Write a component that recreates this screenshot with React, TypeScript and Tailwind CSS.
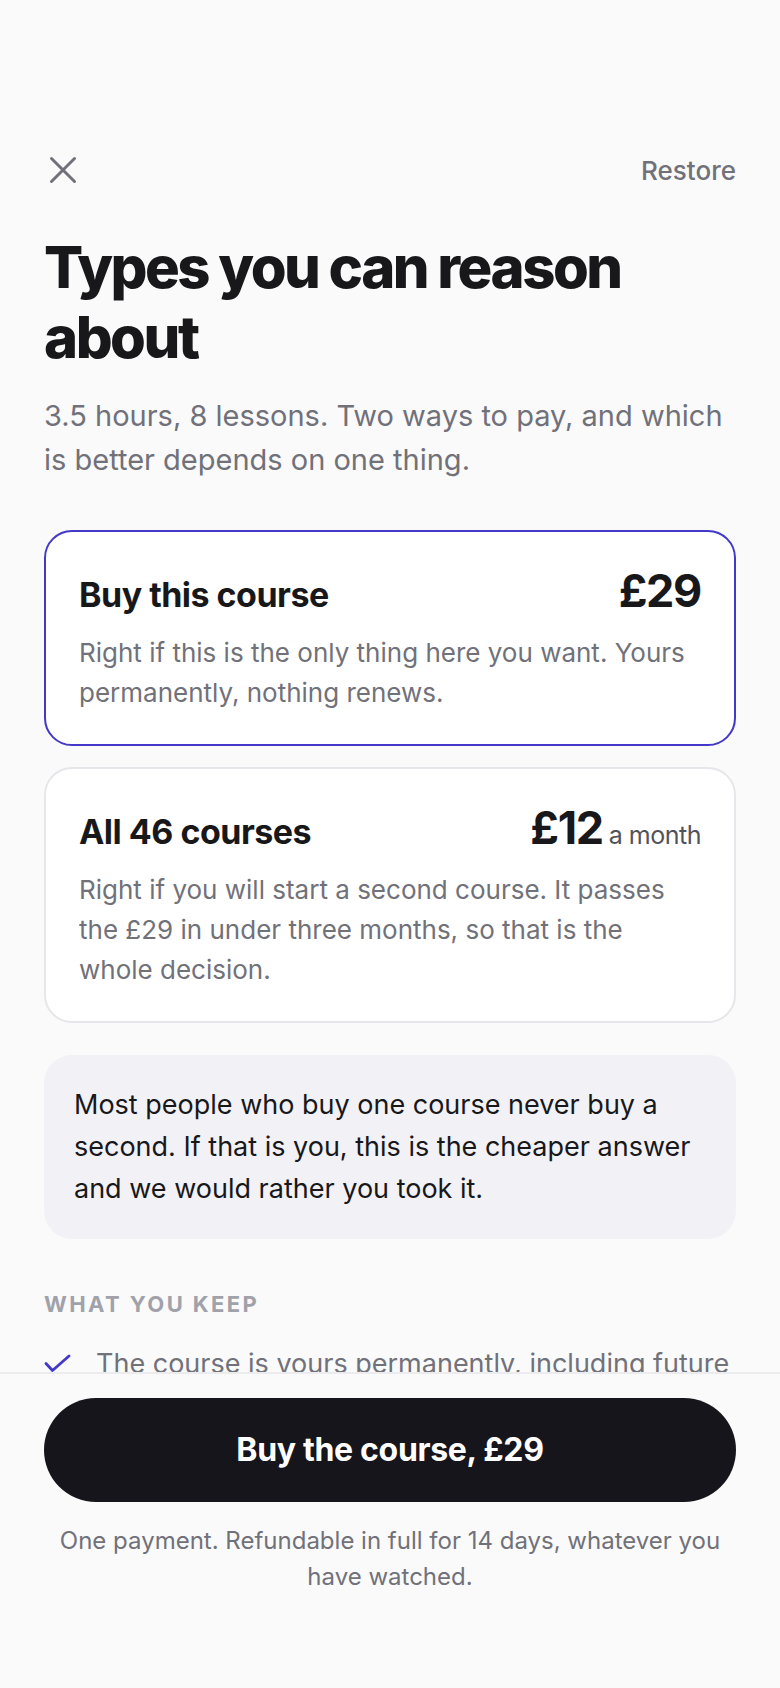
import React from 'react';

const keeps = ['The course is yours permanently, including future updates to it.'];

function CloseIcon() {
  return (
    <svg width="28" height="28" viewBox="0 0 28 28" fill="none">
      <path d="M2.5 2.5L25.5 25.5M25.5 2.5L2.5 25.5" stroke="#71717a" strokeWidth="3" strokeLinecap="round" />
    </svg>
  );
}

function CheckIcon() {
  return (
    <svg width="28" height="20" viewBox="0 0 28 20" fill="none" className="shrink-0 mt-[10px]">
      <path d="M2 9.5L8.5 16.5L25 2" stroke="#4338ca" strokeWidth="2.8" strokeLinecap="round" strokeLinejoin="round" />
    </svg>
  );
}

function PlanCard({
  title,
  price,
  unit,
  text,
  selected,
}: {
  title: string;
  price: string;
  unit?: string;
  text: string;
  selected?: boolean;
}) {
  return (
    <div
      className={
        selected
          ? 'rounded-[28px] border-2 border-[#4338ca] bg-white px-[33px] pt-[36px] pb-[31px]'
          : 'rounded-[28px] border-2 border-[#e7e7eb] bg-white px-[33px] pt-[36px] pb-[31px]'
      }
    >
      <div className="flex items-baseline justify-between">
        <span className="text-[34px] leading-[36px] font-bold tracking-[-0.015em] text-[#18181b]">{title}</span>
        <span className="flex items-baseline gap-[6px]">
          <span className="text-[45px] leading-none font-bold tracking-[-0.03em] text-[#18181b]">{price}</span>
          {unit && <span className="text-[25px] leading-none tracking-[-0.02em] text-[#52525b]">{unit}</span>}
        </span>
      </div>
      <p className="mt-[20px] text-[26px] leading-[40px] text-[#71717a]">{text}</p>
    </div>
  );
}

export default function App() {
  return (
    <div
      className="h-[1688px] flex flex-col bg-[#fafafa] overflow-hidden"
      style={{ fontFamily: 'Inter, "Noto Sans", sans-serif' }}
    >
      <main className="flex-1 overflow-hidden px-[44px] pt-[148px]">
        <div className="flex h-[44px] items-center justify-between">
          <button className="flex h-[28px] w-[28px] items-center justify-center ml-[5px]">
            <CloseIcon />
          </button>
          <button className="text-[26px] font-medium text-[#71717a]">Restore</button>
        </div>

        <h1 className="mt-[40px] text-[58px] leading-[70px] font-extrabold tracking-[-0.043em] text-[#18181b]">
          Types you can reason about
        </h1>
        <p className="mt-[22px] text-[29px] leading-[44px] text-[#71717a]">
          3.5 hours, 8 lessons. Two ways to pay, and which is better depends on one thing.
        </p>

        <div className="mt-[48px] flex flex-col gap-[21px]">
          <PlanCard
            selected
            title="Buy this course"
            price="£29"
            text="Right if this is the only thing here you want. Yours permanently, nothing renews."
          />
          <PlanCard
            title="All 46 courses"
            price="£12"
            unit="a month"
            text="Right if you will start a second course. It passes the £29 in under three months, so that is the whole decision."
          />
        </div>

        <div className="mt-[32px] rounded-[28px] bg-[#f2f1f6] px-[30px] pt-[29px] pb-[29px]">
          <p className="text-[27px] leading-[42px] text-[#18181b]">
            Most people who buy one course never buy a second. If that is you, this is the cheaper answer and we would
            rather you took it.
          </p>
        </div>

        <h2 className="mt-[51px] text-[22px] leading-[28px] font-bold tracking-[0.11em] text-[#a1a1aa]">
          WHAT YOU KEEP
        </h2>
        <ul className="mt-[26px] flex flex-col gap-[16px]">
          {keeps.map((k) => (
            <li key={k} className="flex gap-[24px]">
              <CheckIcon />
              <span className="text-[27px] leading-[40px] text-[#71717a]">{k}</span>
            </li>
          ))}
        </ul>
      </main>

      <footer className="shrink-0 border-t-2 border-[#ececef] bg-[#fafafa] px-[44px] pt-[24px] pb-[93px]">
        <button className="flex h-[104px] w-full items-center justify-center rounded-full bg-[#16151b] text-[32px] font-bold tracking-[-0.01em] text-white">
          Buy the course, £29
        </button>
        <p className="mt-[21px] px-[10px] text-center text-[24px] leading-[36px] text-[#71717a]">
          One payment. Refundable in full for 14 days, whatever you have watched.
        </p>
      </footer>
    </div>
  );
}
